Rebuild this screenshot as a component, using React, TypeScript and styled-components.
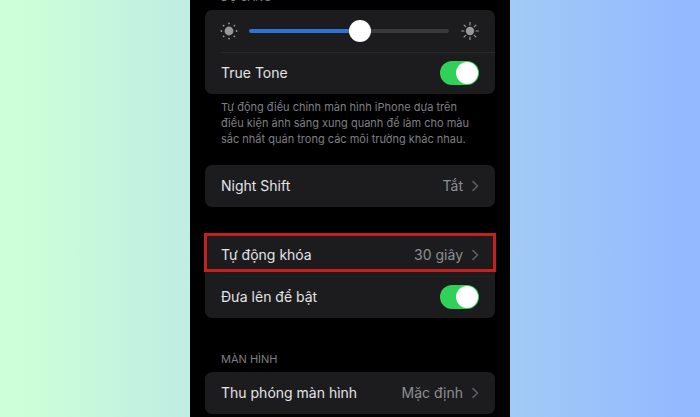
import React, { useId, useState } from "react";
import styled, { createGlobalStyle, css } from "styled-components";

const GlobalStyle = createGlobalStyle`
  *, *::before, *::after { box-sizing: border-box; }
  body {
    margin: 0;
    font-family: Inter, "Liberation Sans", sans-serif;
    -webkit-font-smoothing: antialiased;
  }
`;

const Stage = styled.main`
  display: grid;
  grid-template-columns: 19fr minmax(300px, 32fr) 19fr;
  height: 100vh;
  overflow: hidden;
  background: linear-gradient(90deg, #cdffd8 0%, #cdffd8 3%, #94b9ff 97%, #94b9ff 100%);
`;

const Screen = styled.div`
  grid-column: 2;
  display: flex;
  flex-direction: column;
  padding: 0 15px;
  overflow: hidden;
  background: #000;
`;

const Section = styled.section<{ $gap?: number; $scrolled?: boolean }>`
  flex: none;
  margin-top: ${(p) => (p.$scrolled ? "-11px" : `${p.$gap ?? 0}px`)};
`;

const SectionTitle = styled.h2`
  margin: 0;
  padding: 0 16px 5px;
  font-size: 11px;
  line-height: 16px;
  font-weight: 400;
  color: #7f7f84;
`;

const Card = styled.div`
  border-radius: 7px;
  background: #1c1c1e;
`;

const rowLayout = css`
  position: relative;
  display: flex;
  align-items: center;
  width: 100%;
  height: 42px;
  padding: 0 16px;
`;

const Row = styled.div`
  ${rowLayout}

  * + &::before {
    content: "";
    position: absolute;
    top: 0;
    left: 16px;
    right: 0;
    height: 1px;
    background: #28282a;
  }

  button + &::before {
    background: #202022;
  }
`;

const SliderRow = styled(Row)`
  gap: 12px;
`;

const LinkRow = styled.button`
  ${rowLayout}
  border: 0;
  background: none;
  font: inherit;
  text-align: left;
  cursor: pointer;
`;

const labelText = css`
  flex: 1;
  font-size: 14px;
  line-height: 20px;
  color: #e4e4e6;
`;

const RowLabel = styled.span`
  ${labelText}
`;

const ToggleLabel = styled.label`
  ${labelText}
`;

const RowValue = styled.span`
  margin-right: 9px;
  font-size: 14px;
  line-height: 20px;
  color: #8e8e93;
`;

const Footnote = styled.p`
  margin: 0;
  padding: 5px 16px 0;
  font-size: 11px;
  line-height: 16px;
  color: #7f7f84;
`;

const Highlight = styled.span`
  position: absolute;
  inset: -1px -1px 4px;
  border: 3px solid #c4201f;
  pointer-events: none;
`;

const Switch = styled.input`
  appearance: none;
  flex: none;
  display: flex;
  width: 39px;
  height: 24px;
  margin: 0;
  padding: 1px;
  border-radius: 12px;
  background: #39393d;
  cursor: pointer;

  &::before {
    content: "";
    width: 22px;
    height: 22px;
    border-radius: 50%;
    background: #fff;
  }

  &:checked {
    justify-content: flex-end;
    background: #30d158;
  }
`;

const Range = styled.input`
  appearance: none;
  flex: 1;
  min-width: 0;
  height: 22px;
  margin: 0;
  background: transparent;
  cursor: pointer;

  &::-webkit-slider-runnable-track {
    height: 4px;
    border-radius: 2px;
    background: linear-gradient(90deg, #2f74d0 var(--fill), #39393b var(--fill));
  }

  &::-webkit-slider-thumb {
    appearance: none;
    width: 22px;
    height: 22px;
    margin-top: -9px;
    border-radius: 50%;
    background: #fff;
  }
`;

const Icon = styled.svg`
  flex: none;
  display: block;
  overflow: visible;
`;

const angles = [0, 45, 90, 135, 180, 225, 270, 315];

const DimSun = () => (
  <Icon width="16" height="18" viewBox="-8 -9 16 18" fill="#98989b" aria-hidden="true">
    <circle r="4.4" />
    {angles.map((a) => (
      <circle key={a} cx="7.6" r="0.9" transform={`rotate(${a})`} />
    ))}
  </Icon>
);

const BrightSun = () => (
  <Icon width="18" height="18" viewBox="-9 -9 18 18" fill="#98989b" aria-hidden="true">
    <circle r="4.2" />
    {angles.map((a) => (
      <line
        key={a}
        x1="6.1"
        x2="8.4"
        y1="0"
        y2="0"
        stroke="#98989b"
        strokeWidth="1.2"
        strokeLinecap="round"
        transform={`rotate(${a})`}
      />
    ))}
  </Icon>
);

const Chevron = () => (
  <Icon width="7" height="12" viewBox="0 0 7 12" fill="none" aria-hidden="true">
    <path
      d="M1 1.6 5.6 6 1 10.4"
      stroke="#5c5c60"
      strokeWidth="1.6"
      strokeLinecap="round"
      strokeLinejoin="round"
    />
  </Icon>
);

function BrightnessRow() {
  const [level, setLevel] = useState(56);
  return (
    <SliderRow as="div">
      <DimSun />
      <Range
        type="range"
        min={0}
        max={100}
        value={level}
        aria-label="Độ sáng"
        onChange={(e) => setLevel(Number(e.target.value))}
        style={{ "--fill": `${level}%` } as React.CSSProperties}
      />
      <BrightSun />
    </SliderRow>
  );
}

function ToggleRow({ label }: { label: string }) {
  const id = useId();
  const [on, setOn] = useState(true);
  return (
    <Row>
      <ToggleLabel htmlFor={id}>{label}</ToggleLabel>
      <Switch id={id} type="checkbox" checked={on} onChange={(e) => setOn(e.target.checked)} />
    </Row>
  );
}

function NavRow({ label, value, marked }: { label: string; value: string; marked?: boolean }) {
  return (
    <LinkRow type="button">
      <RowLabel>{label}</RowLabel>
      <RowValue>{value}</RowValue>
      <Chevron />
      {marked && <Highlight />}
    </LinkRow>
  );
}

export default function App() {
  return (
    <>
      <GlobalStyle />
      <Stage>
        <Screen>
          <Section $scrolled>
            <SectionTitle>ĐỘ SÁNG</SectionTitle>
            <Card>
              <BrightnessRow />
              <ToggleRow label="True Tone" />
            </Card>
            <Footnote>
              Tự động điều chỉnh màn hình iPhone dựa trên điều kiện ánh sáng xung quanh để làm cho
              màu sắc nhất quán trong các môi trường khác nhau.
            </Footnote>
          </Section>
          <Section $gap={18}>
            <Card>
              <NavRow label="Night Shift" value="Tắt" />
            </Card>
          </Section>
          <Section $gap={27}>
            <Card>
              <NavRow label="Tự động khóa" value="30 giây" marked />
              <ToggleRow label="Đưa lên để bật" />
            </Card>
          </Section>
          <Section $gap={33}>
            <SectionTitle>MÀN HÌNH</SectionTitle>
            <Card>
              <NavRow label="Thu phóng màn hình" value="Mặc định" />
            </Card>
          </Section>
        </Screen>
      </Stage>
    </>
  );
}
